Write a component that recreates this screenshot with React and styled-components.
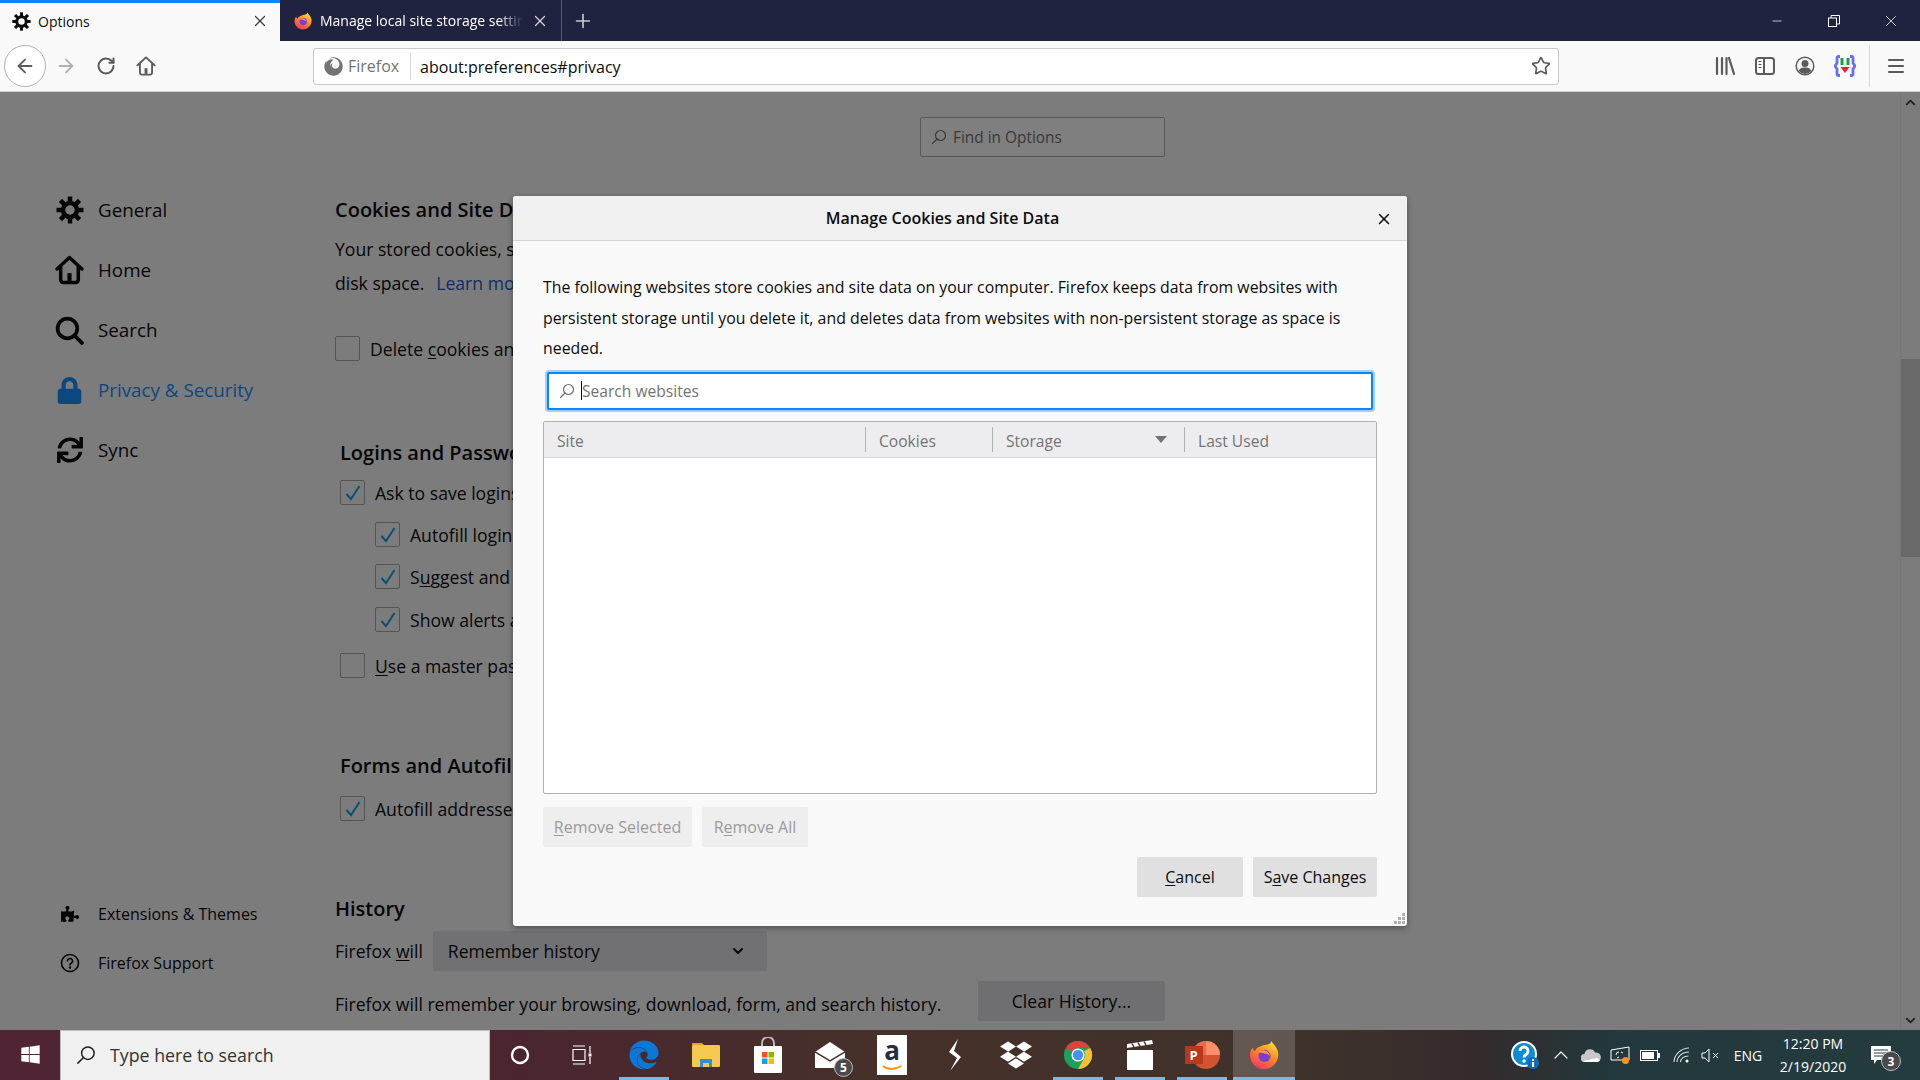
import React from "react";
import styled, { createGlobalStyle } from "styled-components";
import { ArrowLeft, ArrowRight, RotateCw, Star, X, Plus, Minus, ChevronUp, ChevronDown } from "lucide-react";
import { FaFirefox, FaSync, FaPuzzlePiece, FaEdge, FaDropbox, FaWindows, FaLock } from "react-icons/fa";

const UI_FONT = `"Open Sans", "Noto Sans", sans-serif`;

const GlobalStyle = createGlobalStyle`
  html, body { margin: 0; padding: 0; height: 100%; overflow: hidden; }
  body { font-family: ${UI_FONT}; color: #0c0c0d; }
  * { box-sizing: border-box; }
`;

const Screen = styled.div`
  width: 1920px;
  height: 1080px;
  display: flex;
  flex-direction: column;
  overflow: hidden;
`;

/* ---------- tab strip ---------- */
const TabBar = styled.div`
  height: 41px;
  flex: none;
  display: flex;
  align-items: stretch;
  background: #202340;
  color: #fff;
`;
const ActiveTab = styled.div`
  width: 280px;
  display: flex;
  align-items: center;
  gap: 7px;
  padding: 0 11px 2px 12px;
  background: #f9f9fa;
  border-top: 3px solid #0a84ff;
  color: #0c0c0d;
  font-size: 14px;
`;
const Tab = styled.div`
  width: 282px;
  display: flex;
  align-items: center;
  gap: 8px;
  padding: 0 12px 0 14px;
  border-right: 1px solid #575a74;
  font-size: 14px;
`;
const TabTitle = styled.span`
  flex: 1;
  white-space: nowrap;
  overflow: hidden;
  mask-image: linear-gradient(90deg, #000 88%, transparent);
`;
const ActiveTitle = styled.span`
  flex: 1;
`;
const NewTab = styled.div`
  width: 42px;
  display: flex;
  align-items: center;
  justify-content: center;
`;
const WindowButtons = styled.div`
  margin-left: auto;
  display: flex;
  align-items: center;
  padding-right: 1px;
`;
const WindowButton = styled.div`
  width: 57px;
  display: flex;
  justify-content: center;
`;

/* ---------- navigation toolbar ---------- */
const NavBar = styled.div`
  height: 51px;
  flex: none;
  display: flex;
  align-items: center;
  padding: 0 4px;
  background: #f9f9fa;
  border-bottom: 1px solid #cfcfd1;
`;
const BackButton = styled.div`
  width: 42px;
  height: 42px;
  flex: none;
  display: flex;
  align-items: center;
  justify-content: center;
  background: #fff;
  border: 1px solid #b1b1b3;
  border-radius: 50%;
`;
const ToolButton = styled.div`
  width: 40px;
  height: 40px;
  flex: none;
  display: flex;
  align-items: center;
  justify-content: center;
`;
const UrlBar = styled.div`
  flex: 1;
  height: 37px;
  margin: 0 146px 0 147px;
  display: flex;
  align-items: center;
  background: #fff;
  border: 1px solid #c8c8ca;
  border-radius: 3px;
  font-size: 16px;
`;
const Identity = styled.div`
  width: 97px;
  height: 27px;
  flex: none;
  display: flex;
  align-items: center;
  gap: 5px;
  padding-left: 10px;
  border-right: 1px solid #d7d7db;
  color: #737373;
`;
const UrlText = styled.span`
  flex: 1;
  padding: 2px 0 0 9px;
`;
const StarSlot = styled.div`
  width: 35px;
  display: flex;
  justify-content: center;
`;
const ToolDivider = styled.div`
  width: 1px;
  height: 42px;
  margin: 0 6px 0 4px;
  background: #d7d7db;
`;

/* ---------- preferences page ---------- */
const Main = styled.div`
  position: relative;
  flex: 1;
  min-height: 0;
  display: flex;
  background: #f9f9fa;
  overflow: hidden;
`;
const Sidebar = styled.nav`
  width: 335px;
  flex: none;
  display: flex;
  flex-direction: column;
  padding: 88px 0 43px 55px;
`;
const NavItem = styled.div`
  height: 60px;
  display: flex;
  align-items: center;
  gap: 14px;
  font-size: 18.8px;
  color: ${(p) => (p.$active ? "#1690ff" : "#0c0c0d")};
`;
const NavIcon = styled.div`
  width: 29px;
  display: flex;
  justify-content: center;
  color: inherit;
`;
const SideFooter = styled.div`
  margin-top: auto;
  display: flex;
  flex-direction: column;
`;
const FooterItem = styled.div`
  height: 49px;
  display: flex;
  align-items: center;
  gap: 14px;
  font-size: 16px;
`;
const Content = styled.div`
  width: 830px;
  flex: none;
  display: flex;
  flex-direction: column;
  padding-top: 25px;
`;
const FindBox = styled.div`
  width: 245px;
  height: 40px;
  align-self: flex-end;
  flex: none;
  display: flex;
  align-items: center;
  gap: 6px;
  padding-left: 10px;
  background: #fff;
  border: 1px solid #b1b1b3;
  border-radius: 2px;
  color: #737373;
  font-size: 15.4px;
`;
const Section = styled.section`
  margin-top: ${(p) => p.$top}px;
  padding-left: ${(p) => p.$inset || 0}px;
  display: flex;
  flex-direction: column;
`;
const Heading = styled.h2`
  margin: 0;
  height: 28px;
  font-size: 20px;
  line-height: 28px;
  font-weight: 600;
  white-space: nowrap;
`;
const BodyText = styled.p`
  margin: 8px 0 0;
  font-size: 17.6px;
  line-height: 34px;
  white-space: nowrap;
`;
const PageLink = styled.a`
  margin-left: 12px;
  color: #1a60c8;
`;
const CheckRow = styled.label`
  height: 25px;
  margin-top: ${(p) => p.$top}px;
  margin-left: ${(p) => p.$indent || 0}px;
  display: flex;
  align-items: center;
  gap: 10px;
  font-size: 17.6px;
  white-space: nowrap;
`;
const CheckBox = styled.span`
  width: 25px;
  height: 25px;
  flex: none;
  display: flex;
  align-items: center;
  justify-content: center;
  background: #f9f9fa;
  border: 1px solid #a8a8aa;
  border-radius: 2px;
`;
const HistoryRow = styled.div`
  margin-top: ${(p) => p.$top}px;
  display: flex;
  align-items: center;
  font-size: 17.6px;
  white-space: nowrap;
`;
const Select = styled.div`
  width: 334px;
  height: 40px;
  margin-left: 10px;
  display: flex;
  align-items: center;
  justify-content: space-between;
  padding: 0 21px 0 15px;
  background: #e2e2e6;
  border-radius: 2px;
`;
const PageButton = styled.div`
  width: 187px;
  height: 40px;
  margin-left: auto;
  display: flex;
  align-items: center;
  justify-content: center;
  background: #dedee2;
  border-radius: 2px;
`;
const HistoryNote = styled.span`
  padding-top: 5px;
`;
const Key = styled.span`
  text-decoration: underline;
  text-underline-offset: 2px;
`;
const ScrollBar = styled.div`
  margin-left: auto;
  width: 20px;
  flex: none;
  display: flex;
  flex-direction: column;
  align-items: center;
  background: #f9f9fa;
  border-left: 1px solid #ededf0;
`;
const ScrollEnd = styled.div`
  height: 20px;
  flex: none;
  display: flex;
  align-items: center;
  justify-content: center;
`;
const ScrollTrack = styled.div`
  flex: 1;
  width: 100%;
  padding-top: 247px;
`;
const ScrollThumb = styled.div`
  height: 198px;
  background: #d2d2d4;
`;

/* ---------- dimmed layer and dialog ---------- */
const Scrim = styled.div`
  position: absolute;
  inset: 0;
  display: flex;
  justify-content: center;
  align-items: flex-start;
  padding-top: 104px;
  background: rgba(0, 0, 0, 0.5);
`;
const Dialog = styled.div`
  position: relative;
  width: 894px;
  height: 730px;
  display: flex;
  flex-direction: column;
  background: #f9f9fa;
  border-radius: 3px;
  box-shadow: 0 2px 6px rgba(0, 0, 0, 0.35);
  overflow: hidden;
`;
const DialogHeader = styled.div`
  position: relative;
  height: 45px;
  flex: none;
  display: flex;
  align-items: center;
  justify-content: center;
  padding-right: 35px;
  background: #f0f0f1;
  border-bottom: 1px solid #d7d7db;
  font-size: 16px;
  font-weight: 600;
`;
const DialogClose = styled.div`
  position: absolute;
  right: 14px;
  top: 14px;
  display: flex;
`;
const DialogBody = styled.div`
  flex: 1;
  display: flex;
  flex-direction: column;
  padding: 31px 30px 29px;
`;
const Description = styled.p`
  margin: 0;
  font-size: 15.86px;
  line-height: 30.5px;
`;
const SearchField = styled.div`
  height: 38px;
  flex: none;
  margin: 8px 4px 0;
  display: flex;
  align-items: center;
  padding-left: 10px;
  background: #fff;
  border: 2px solid #0a84ff;
  border-radius: 2px;
  box-shadow: 0 0 0 2px #a0d0ff;
  color: #737373;
  font-size: 15.6px;
`;
const Caret = styled.span`
  width: 1px;
  height: 19px;
  margin: 0 0 0 6px;
  background: #0c0c0d;
`;
const SiteTable = styled.div`
  height: 373px;
  flex: none;
  margin-top: 11px;
  background: #fff;
  border: 1px solid #b1b1b3;
  border-radius: 2px;
`;
const TableHead = styled.div`
  height: 36px;
  display: flex;
  background: #ededf0;
  border-bottom: 1px solid #d7d7db;
  color: #737373;
  font-size: 15.6px;
`;
const HeadCell = styled.div`
  width: ${(p) => p.$w}px;
  flex: ${(p) => (p.$w ? "none" : 1)};
  margin: 5px 0;
  display: flex;
  align-items: center;
  justify-content: space-between;
  padding: 3px 14px 0 13px;
  border-right: ${(p) => (p.$w ? "1px solid #b1b1b3" : "none")};
`;
const SortArrow = styled.span`
  width: 0;
  height: 0;
  margin: 0 3px 3px 0;
  border-left: 6px solid transparent;
  border-right: 6px solid transparent;
  border-top: 7px solid #737373;
`;
const ButtonRow = styled.div`
  margin-top: ${(p) => p.$top}px;
  display: flex;
  gap: 10px;
  justify-content: ${(p) => (p.$end ? "flex-end" : "flex-start")};
`;
const DialogButton = styled.div`
  width: ${(p) => p.$w}px;
  height: 40px;
  display: flex;
  align-items: center;
  justify-content: center;
  border-radius: 2px;
  font-size: 16px;
  background: ${(p) => (p.$disabled ? "#eeeeef" : "#e0e0e1")};
  color: ${(p) => (p.$disabled ? "#9a9a9c" : "#0c0c0d")};
`;
const Grip = styled.svg`
  position: absolute;
  right: 1px;
  bottom: 1px;
`;

/* ---------- windows taskbar ---------- */
const Taskbar = styled.div`
  height: 50px;
  flex: none;
  display: flex;
  align-items: stretch;
  color: #fff;
  background: linear-gradient(90deg, #502434 0%, #4b2430 25%, #46302a 45%, #3f322b 68%, #342b2c 77%, #22383c 84%, #253c3f 100%);
`;
const StartButton = styled.div`
  width: 60px;
  padding-bottom: 1px;
  display: flex;
  align-items: center;
  justify-content: center;
`;
const TaskSearch = styled.div`
  width: 430px;
  display: flex;
  align-items: center;
  gap: 14px;
  padding: 0 0 2px 15px;
  background: #f0f0f0;
  border: 1px solid #bdbdbd;
  border-bottom: 0;
  color: #333;
  font-size: 17.8px;
`;
const TaskStrip = styled.div`
  display: flex;
  margin-left: -1px;
`;
const TaskIcon = styled.div`
  position: relative;
  width: 62px;
  flex: none;
  padding-bottom: 1px;
  display: flex;
  align-items: center;
  justify-content: center;
  background: ${(p) => (p.$current ? "rgba(255,255,255,0.18)" : "transparent")};
  &::after {
    content: "";
    position: absolute;
    bottom: 0;
    left: ${(p) => (p.$current ? 0 : "6px")};
    right: ${(p) => (p.$current ? 0 : "6px")};
    height: 3px;
    background: ${(p) => (p.$open ? "#76b9ed" : "transparent")};
  }
`;
const TaskBadge = styled.span`
  position: absolute;
  right: 8px;
  bottom: 3px;
  width: 19px;
  height: 19px;
  display: flex;
  align-items: center;
  justify-content: center;
  background: #4a4a4a;
  border: 1px solid #bbb;
  border-radius: 50%;
  font-size: 12px;
  font-weight: 700;
`;
const AmazonTile = styled.div`
  width: 30px;
  height: 40px;
  display: flex;
  flex-direction: column;
  align-items: center;
  background: #fff;
  color: #232f3e;
  font-size: 26px;
  font-weight: 700;
  line-height: 30px;
`;
const PowerPointTile = styled.span`
  width: 18px;
  height: 18px;
  margin-right: -11px;
  display: flex;
  align-items: center;
  justify-content: center;
  background: #b7381a;
  color: #fff;
  border-radius: 1px;
  font-size: 13px;
  font-weight: 700;
  z-index: 1;
`;
const Tray = styled.div`
  margin-left: auto;
  display: flex;
  align-items: center;
  padding-right: 19px;
`;
const TraySlot = styled.div`
  position: relative;
  width: ${(p) => p.$w}px;
  display: flex;
  justify-content: center;
`;
const TrayLang = styled.div`
  width: 46px;
  text-align: center;
  font-size: 14px;
`;
const Clock = styled.div`
  width: 86px;
  margin: 0 4px 0 -1px;
  text-align: center;
  font-size: 14px;
  line-height: 23px;
`;
const NotifyBadge = styled(TaskBadge)`
  right: 0;
  bottom: -7px;
  width: 20px;
  height: 20px;
`;

/* ---------- drawn icons ---------- */
const Gear = ({ size = 28, color = "#0c0c0d" }) => {
  const teeth = [0, 45, 90, 135, 180, 225, 270, 315];
  return (
    <svg width={size} height={size} viewBox="0 0 28 28">
      <circle cx="14" cy="14" r="7" fill="none" stroke={color} strokeWidth="4.500" />
      {teeth.map((a) => (
        <line key={a} x1="14" y1="6" x2="14" y2="0.500" stroke={color} strokeWidth="4.500" transform={`rotate(${a} 14 14)`} />
      ))}
    </svg>
  );
};
const HomeIcon = ({ size = 30, color = "#0c0c0d", w = 3.4 }) => (
  <svg width={size} height={size} viewBox="0 0 28 28" fill="none" stroke={color} strokeWidth={w} strokeLinejoin="round" strokeLinecap="round">
    <path d="M2 13 14 2l12 11" />
    <path d="M5.500 11v12.500a2.500 2.500 0 0 0 2.500 2.500h12a2.500 2.500 0 0 0 2.500-2.500V11" />
    <rect x="12" y="17" width="4" height="8" fill={color} stroke="none" />
  </svg>
);
const Magnifier = ({ size = 29, color = "#0c0c0d", w = 3.6 }) => (
  <svg width={size} height={size} viewBox="0 0 28 28" fill="none" stroke={color} strokeWidth={w} strokeLinecap="round">
    <circle cx="12" cy="12" r="9.500" />
    <line x1="19" y1="19" x2="26" y2="26" />
  </svg>
);
const FindGlyph = ({ size = 16, color = "#737373" }) => (
  <svg width={size} height={size} viewBox="0 0 16 16" fill="none" stroke={color} strokeWidth="1.200" strokeLinecap="round">
    <circle cx="9.500" cy="6.500" r="5" />
    <line x1="6" y1="10" x2="1.500" y2="14.500" />
  </svg>
);
const Check = () => (
  <svg width="18" height="18" viewBox="0 0 18 18" fill="none" stroke="#14a0e8" strokeWidth="2">
    <path d="M2.500 10 7 15 15.500 2" />
  </svg>
);
const HelpCircle = ({ size = 20, color = "#0c0c0d" }) => (
  <svg width={size} height={size} viewBox="0 0 20 20" fill="none" stroke={color} strokeWidth="1.600" strokeLinecap="round">
    <circle cx="10" cy="10" r="8.500" />
    <path d="M7.500 8a2.500 2.500 0 1 1 3.600 2.200c-.8.400-1.100 1-1.100 1.800" />
    <circle cx="10" cy="14.500" r="0.500" />
  </svg>
);
const FirefoxLogo = ({ size = 20, id = "fx" }) => (
  <svg width={size} height={size} viewBox="0 0 32 32">
    <defs>
      <linearGradient id={`${id}-a`} x1="0.8" y1="0" x2="0.2" y2="1">
        <stop offset="0" stopColor="#ffe03b" />
        <stop offset="0.45" stopColor="#ff8a1f" />
        <stop offset="1" stopColor="#f8306f" />
      </linearGradient>
    </defs>
    <path d="M24 1c1 3 6 6 7 12 1.500 9-5 18-15 18C7 31 1 24 1 16c0-3 1-6 3-8 0 2 1 3 2 4 1-3 4-5 8-6 4-1 9-1 10-5z" fill={`url(#${id}-a)`} />
    <circle cx="16.500" cy="17" r="6.500" fill="#7a3fd0" />
    <path d="M10 13c4-4 11-2 12.500 4-3-3-8-3-12.500-4z" fill="#ff9a2b" />
  </svg>
);
const LibraryIcon = () => (
  <svg width="20" height="20" viewBox="0 0 20 20" stroke="#5b5b5c" strokeWidth="2.200" strokeLinecap="round">
    <line x1="2" y1="2" x2="2" y2="18" />
    <line x1="7" y1="2" x2="7" y2="18" />
    <line x1="11.500" y1="2" x2="11.500" y2="18" />
    <line x1="14" y1="2" x2="19" y2="18" />
  </svg>
);
const SidebarIcon = () => (
  <svg width="20" height="18" viewBox="0 0 20 18" fill="none" stroke="#5b5b5c" strokeWidth="2">
    <rect x="1" y="1" width="18" height="16" rx="2.500" />
    <line x1="9" y1="1" x2="9" y2="17" />
    <path d="M3.500 4.500h3M3.500 7.500h3M3.500 10.500h3" strokeWidth="1.200" />
  </svg>
);
const AccountIcon = () => (
  <svg width="20" height="20" viewBox="0 0 20 20">
    <circle cx="10" cy="10" r="8.800" fill="none" stroke="#5b5b5c" strokeWidth="1.500" />
    <circle cx="10" cy="7.500" r="3.500" fill="#5b5b5c" />
    <path d="M3.800 15c1-3 3-3.500 6.200-3.500s5.200.5 6.200 3.500a8 8 0 0 1-12.400 0z" fill="#5b5b5c" />
  </svg>
);
const ExtensionIcon = () => (
  <svg width="22" height="22" viewBox="0 0 22 22">
    <path d="M6 1.500H4.500a1.500 1.500 0 0 0-1.500 1.500v5l-2 3 2 3v5a1.500 1.500 0 0 0 1.500 1.500H6M16 1.500h1.500A1.500 1.500 0 0 1 19 3v5l2 3-2 3v5a1.500 1.500 0 0 1-1.500 1.500H16" fill="none" stroke="#6a6ff0" strokeWidth="2.800" />
    <rect x="6.500" y="3" width="3" height="7" fill="#1fa03c" />
    <rect x="12.500" y="3" width="3" height="7" fill="#1fa03c" />
    <path d="M6.500 12h9L11 18z" fill="#ee1c25" />
  </svg>
);
const MenuIcon = () => (
  <svg width="18" height="16" viewBox="0 0 18 16" stroke="#5b5b5c" strokeWidth="2.200" strokeLinecap="round">
    <line x1="2" y1="2" x2="16" y2="2" />
    <line x1="2" y1="8" x2="16" y2="8" />
    <line x1="2" y1="14" x2="16" y2="14" />
  </svg>
);
const RestoreIcon = () => (
  <svg width="12" height="12" viewBox="0 0 12 12" fill="none" stroke="#fff" strokeWidth="1">
    <rect x="0.500" y="3" width="8" height="8.500" />
    <path d="M3 3V.500h8.500V9H8.500" />
  </svg>
);
const TaskViewIcon = () => (
  <svg width="20" height="20" viewBox="0 0 20 20" fill="none" stroke="#fff" strokeWidth="1.200">
    <path d="M1 1h12M1 19h12M1 4.500h12v11H1z" />
    <path d="M18 1v7M18 12v7" />
    <rect x="16.500" y="8.500" width="3" height="3" fill="#fff" stroke="none" />
  </svg>
);
const FolderIcon = () => (
  <svg width="30" height="30" viewBox="0 0 30 30">
    <path d="M1 3h10l2 2h-12z" fill="#e8a317" />
    <rect x="1" y="5" width="28" height="22" rx="1" fill="#f5c94f" />
    <path d="M9 27v-8h12v8h-3v-4h-6v4z" fill="#2f8fdc" />
  </svg>
);
const StoreIcon = () => (
  <svg width="30" height="36" viewBox="0 0 30 36">
    <path d="M9 10V6a6 6 0 0 1 12 0v4" fill="none" stroke="#bbb" strokeWidth="2" />
    <rect x="1" y="9" width="28" height="27" rx="1" fill="#fff" />
    <rect x="9" y="15" width="5.500" height="5.500" fill="#f25022" />
    <rect x="15.500" y="15" width="5.500" height="5.500" fill="#7fba00" />
    <rect x="9" y="21.500" width="5.500" height="5.500" fill="#00a4ef" />
    <rect x="15.500" y="21.500" width="5.500" height="5.500" fill="#ffb900" />
  </svg>
);
const MailIcon = () => (
  <svg width="30" height="30" viewBox="0 0 30 30">
    <path d="M15 2 30 12v16H0V12z" fill="#fff" />
    <path d="M0 12 15 21 30 12" fill="none" stroke="#46302a" strokeWidth="1.500" />
  </svg>
);
const SparkIcon = () => (
  <svg width="16" height="32" viewBox="0 0 16 32">
    <path d="M12 0 3 13l8 6-7 13 11-14-7-6 4-12z" fill="#fff" />
  </svg>
);
const ChromeIcon = () => (
  <svg width="30" height="30" viewBox="0 0 32 32">
    <circle cx="16" cy="16" r="15" fill="#1ba15b" />
    <path d="M16 1a15 15 0 0 1 13 7.500H16a7.500 7.500 0 0 0-6.500 3.800L3 8.500A15 15 0 0 1 16 1z" fill="#e0413a" />
    <path d="M29 8.500A15 15 0 0 1 16 31l6.500-11.200A7.500 7.500 0 0 0 22.500 12z" fill="#fbc02d" />
    <circle cx="16" cy="16" r="7" fill="#fff" />
    <circle cx="16" cy="16" r="5.500" fill="#4a8ef0" />
  </svg>
);
const ClapperIcon = () => (
  <svg width="28" height="30" viewBox="0 0 28 30">
    <path d="M1 4 26 0l1 4L1 8z" fill="#fff" />
    <path d="M6 3.500 8 7M12 2.500l2 3.500M18 1.500l2 3.500" stroke="#46302a" strokeWidth="1.500" />
    <rect x="1" y="10" width="26" height="20" fill="#fff" />
  </svg>
);
const PowerPointDisc = () => (
  <svg width="28" height="28" viewBox="0 0 30 30">
    <circle cx="15" cy="15" r="15" fill="#d35230" />
    <path d="M15 0a15 15 0 0 1 15 15H15z" fill="#ff8f6b" />
    <path d="M15 0a15 15 0 0 0-15 15h15z" fill="#ed6c47" />
  </svg>
);
const TrayHelp = () => (
  <svg width="28" height="28" viewBox="0 0 28 28">
    <circle cx="13" cy="13" r="12" fill="#0f8bd6" stroke="#fff" strokeWidth="2" />
    <path d="M9 10a4 4 0 1 1 6 3.500c-1.300.8-2 1.500-2 3" fill="none" stroke="#fff" strokeWidth="2.800" />
    <circle cx="13" cy="20" r="1.700" fill="#fff" />
    <circle cx="22" cy="22" r="6" fill="#0f6cb8" />
    <rect x="21" y="21" width="2" height="5" fill="#fff" />
    <rect x="21" y="18" width="2" height="2" fill="#fff" />
  </svg>
);
const CloudIcon = () => (
  <svg width="20" height="13" viewBox="0 0 20 13">
    <path d="M4 13a4 4 0 0 1-.5-8A5.500 5.500 0 0 1 14 3.500 4.800 4.800 0 0 1 16 13z" fill="#c8c8c8" />
    <path d="M4 13a4 4 0 0 1-2-1l14-3 3 2a4 4 0 0 1-3 2z" fill="#fff" />
  </svg>
);
const MonitorIcon = () => (
  <svg width="20" height="18" viewBox="0 0 20 18">
    <path d="M1 4 19 1v13H1z" fill="none" stroke="#fff" strokeWidth="1" />
    <path d="M6 9a3 3 0 0 1 3-3M11 6l2 1M7 12l2-1" fill="none" stroke="#fff" strokeWidth="1" />
    <circle cx="15.500" cy="14.500" r="3.500" fill="#f7931e" />
  </svg>
);
const BatteryIcon = () => (
  <svg width="20" height="11" viewBox="0 0 20 11">
    <rect x="0.500" y="0.500" width="17" height="10" fill="none" stroke="#fff" />
    <rect x="2" y="2" width="12" height="7" fill="#fff" />
    <rect x="18" y="3" width="2" height="5" fill="#fff" />
  </svg>
);
const WifiIcon = () => (
  <svg width="17" height="16" viewBox="0 0 17 16" fill="none" stroke="#d8d8d8" strokeWidth="1.100">
    <path d="M1 15C1 8 8 1 16 1M4 15c0-5 5-10 12-10M7.500 15c0-3 3-6 8-6" />
    <circle cx="14" cy="14" r="1.500" fill="#fff" stroke="none" />
  </svg>
);
const SpeakerIcon = () => (
  <svg width="20" height="15" viewBox="0 0 20 15" fill="none" stroke="#fff" strokeWidth="1">
    <path d="M1 5h3l4-4v13l-4-4H1z" />
    <path d="M12 5l5 5M17 5l-5 5" />
  </svg>
);
const NotifyIcon = () => (
  <svg width="20" height="18" viewBox="0 0 20 18">
    <path d="M0 0h20v14H6l-3 4v-4H0z" fill="#fff" />
    <path d="M3 4h14M3 7h14M3 10h14" stroke="#253c3f" strokeWidth="1" />
  </svg>
);

export default function App() {
  return (
    <Screen>
      <GlobalStyle />
      <TabBar>
        <ActiveTab>
          <Gear size={19} />
          <ActiveTitle>Options</ActiveTitle>
          <X size={18} color="#38383d" strokeWidth={1.6} />
        </ActiveTab>
        <Tab>
          <FirefoxLogo size={18} id="tab" />
          <TabTitle>Manage local site storage settings</TabTitle>
          <X size={18} color="#d8d8dc" strokeWidth={1.6} />
        </Tab>
        <NewTab>
          <Plus size={22} color="#c9c9d0" strokeWidth={1.8} />
        </NewTab>
        <WindowButtons>
          <WindowButton><Minus size={14} color="#fff" strokeWidth={1.2} /></WindowButton>
          <WindowButton><RestoreIcon /></WindowButton>
          <WindowButton><X size={18} color="#fff" strokeWidth={1} /></WindowButton>
        </WindowButtons>
      </TabBar>

      <NavBar>
        <BackButton><ArrowLeft size={22} color="#5b5b5c" strokeWidth={2} /></BackButton>
        <ToolButton><ArrowRight size={22} color="#b1b1b3" strokeWidth={2} /></ToolButton>
        <ToolButton><RotateCw size={20} color="#5b5b5c" strokeWidth={2.4} /></ToolButton>
        <ToolButton><HomeIcon size={20} color="#5b5b5c" w={2.6} /></ToolButton>
        <UrlBar>
          <Identity>
            <FaFirefox size={19} />
            <span>Firefox</span>
          </Identity>
          <UrlText>about:preferences#privacy</UrlText>
          <StarSlot><Star size={20} color="#5b5b5c" strokeWidth={2} /></StarSlot>
        </UrlBar>
        <ToolButton><LibraryIcon /></ToolButton>
        <ToolButton><SidebarIcon /></ToolButton>
        <ToolButton><AccountIcon /></ToolButton>
        <ToolButton><ExtensionIcon /></ToolButton>
        <ToolDivider />
        <ToolButton><MenuIcon /></ToolButton>
      </NavBar>

      <Main>
        <Sidebar>
          <NavItem><NavIcon><Gear /></NavIcon>General</NavItem>
          <NavItem><NavIcon><HomeIcon /></NavIcon>Home</NavItem>
          <NavItem><NavIcon><Magnifier /></NavIcon>Search</NavItem>
          <NavItem $active><NavIcon><FaLock size={27} color="#1690ff" /></NavIcon>Privacy &amp; Security</NavItem>
          <NavItem><NavIcon><FaSync size={26} /></NavIcon>Sync</NavItem>
          <SideFooter>
            <FooterItem><NavIcon><FaPuzzlePiece size={18} /></NavIcon>Extensions &amp; Themes</FooterItem>
            <FooterItem><NavIcon><HelpCircle /></NavIcon>Firefox Support</FooterItem>
          </SideFooter>
        </Sidebar>
        <Content>
          <FindBox><FindGlyph />Find in Options</FindBox>
          <Section $top={39}>
            <Heading>Cookies and Site Data</Heading>
            <BodyText>
              Your stored cookies, site data, and cache are currently using 1.2 GB of
              <br />
              disk space.<PageLink>Learn more</PageLink>
            </BodyText>
            <CheckRow $top={36}>
              <CheckBox />
              <span>Delete <Key>c</Key>ookies and site data when Firefox is closed</span>
            </CheckRow>
          </Section>
          <Section $top={78} $inset={5}>
            <Heading>Logins and Passwords</Heading>
            <CheckRow $top={13}><CheckBox><Check /></CheckBox>Ask to save logins and passwords for websites</CheckRow>
            <CheckRow $top={17} $indent={35}>
              <CheckBox><Check /></CheckBox>
              <span>Autof<Key>i</Key>ll logins and passwords</span>
            </CheckRow>
            <CheckRow $top={17} $indent={35}>
              <CheckBox><Check /></CheckBox>
              <span>S<Key>u</Key>ggest and generate strong passwords</span>
            </CheckRow>
            <CheckRow $top={18} $indent={35}><CheckBox><Check /></CheckBox>Show alerts about passwords for breached websites</CheckRow>
            <CheckRow $top={21}>
              <CheckBox />
              <span><Key>U</Key>se a master password</span>
            </CheckRow>
          </Section>
          <Section $top={74} $inset={5}>
            <Heading>Forms and Autofill</Heading>
            <CheckRow $top={16}><CheckBox><Check /></CheckBox>Autofill addresses</CheckRow>
          </Section>
          <Section $top={74}>
            <Heading>History</Heading>
            <HistoryRow $top={8}>
              <span>Firefox <Key>w</Key>ill</span>
              <Select>
                Remember history
                <ChevronDown size={16} strokeWidth={3} />
              </Select>
            </HistoryRow>
            <HistoryRow $top={10}>
              <HistoryNote>Firefox will remember your browsing, download, form, and search history.</HistoryNote>
              <PageButton><span>Clear Hi<Key>s</Key>tory...</span></PageButton>
            </HistoryRow>
          </Section>
        </Content>
        <ScrollBar>
          <ScrollEnd><ChevronUp size={15} strokeWidth={3} color="#444" /></ScrollEnd>
          <ScrollTrack><ScrollThumb /></ScrollTrack>
          <ScrollEnd><ChevronDown size={15} strokeWidth={3} color="#444" /></ScrollEnd>
        </ScrollBar>

        <Scrim>
          <Dialog>
            <DialogHeader>
              Manage Cookies and Site Data
              <DialogClose><X size={18} strokeWidth={2} color="#0c0c0d" /></DialogClose>
            </DialogHeader>
            <DialogBody>
              <Description>
                The following websites store cookies and site data on your computer. Firefox keeps data from websites with
                persistent storage until you delete it, and deletes data from websites with non-persistent storage as space is
                needed.
              </Description>
              <SearchField>
                <FindGlyph />
                <Caret />
                <span>Search websites</span>
              </SearchField>
              <SiteTable>
                <TableHead>
                  <HeadCell $w={322}>Site</HeadCell>
                  <HeadCell $w={127}>Cookies</HeadCell>
                  <HeadCell $w={192}>Storage<SortArrow /></HeadCell>
                  <HeadCell>Last Used</HeadCell>
                </TableHead>
              </SiteTable>
              <ButtonRow $top={13}>
                <DialogButton $disabled $w={149}><span><Key>R</Key>emove Selected</span></DialogButton>
                <DialogButton $disabled $w={106}><span>R<Key>e</Key>move All</span></DialogButton>
              </ButtonRow>
              <ButtonRow $top={10} $end>
                <DialogButton $w={106}><span><Key>C</Key>ancel</span></DialogButton>
                <DialogButton $w={124}><span>S<Key>a</Key>ve Changes</span></DialogButton>
              </ButtonRow>
            </DialogBody>
            <Grip width="12" height="12" viewBox="0 0 12 12" fill="#b1b1b3">
              <rect x="8" y="0" width="3" height="3" />
              <rect x="4" y="4" width="3" height="3" />
              <rect x="8" y="4" width="3" height="3" />
              <rect x="0" y="8" width="3" height="3" />
              <rect x="4" y="8" width="3" height="3" />
              <rect x="8" y="8" width="3" height="3" />
            </Grip>
          </Dialog>
        </Scrim>
      </Main>

      <Taskbar>
        <StartButton><FaWindows size={21} /></StartButton>
        <TaskSearch>
          <FindGlyph size={20} color="#222" />
          Type here to search
        </TaskSearch>
        <TaskStrip>
          <TaskIcon>
            <svg width="20" height="20" viewBox="0 0 20 20"><circle cx="10" cy="10" r="8" fill="none" stroke="#fff" strokeWidth="2.400" /></svg>
          </TaskIcon>
          <TaskIcon><TaskViewIcon /></TaskIcon>
          <TaskIcon $open><FaEdge size={30} color="#0a78d7" /></TaskIcon>
          <TaskIcon><FolderIcon /></TaskIcon>
          <TaskIcon><StoreIcon /></TaskIcon>
          <TaskIcon><MailIcon /><TaskBadge>5</TaskBadge></TaskIcon>
          <TaskIcon>
            <AmazonTile>
              a
              <svg width="20" height="6" viewBox="0 0 20 6"><path d="M1 1c5 4 12 4 18 0" fill="none" stroke="#f90" strokeWidth="2" /></svg>
            </AmazonTile>
          </TaskIcon>
          <TaskIcon><SparkIcon /></TaskIcon>
          <TaskIcon><FaDropbox size={32} /></TaskIcon>
          <TaskIcon $open><ChromeIcon /></TaskIcon>
          <TaskIcon $open><ClapperIcon /></TaskIcon>
          <TaskIcon $open><PowerPointTile>P</PowerPointTile><PowerPointDisc /></TaskIcon>
          <TaskIcon $open $current><FirefoxLogo size={30} id="task" /></TaskIcon>
        </TaskStrip>
        <Tray>
          <TraySlot $w={42}><TrayHelp /></TraySlot>
          <TraySlot $w={29}><ChevronUp size={24} strokeWidth={1.2} /></TraySlot>
          <TraySlot $w={31}><CloudIcon /></TraySlot>
          <TraySlot $w={27}><MonitorIcon /></TraySlot>
          <TraySlot $w={33}><BatteryIcon /></TraySlot>
          <TraySlot $w={30}><WifiIcon /></TraySlot>
          <TraySlot $w={29}><SpeakerIcon /></TraySlot>
          <TrayLang>ENG</TrayLang>
          <Clock>12:20 PM<br />2/19/2020</Clock>
          <TraySlot $w={41}><NotifyIcon /><NotifyBadge>3</NotifyBadge></TraySlot>
        </Tray>
      </Taskbar>
    </Screen>
  );
}
